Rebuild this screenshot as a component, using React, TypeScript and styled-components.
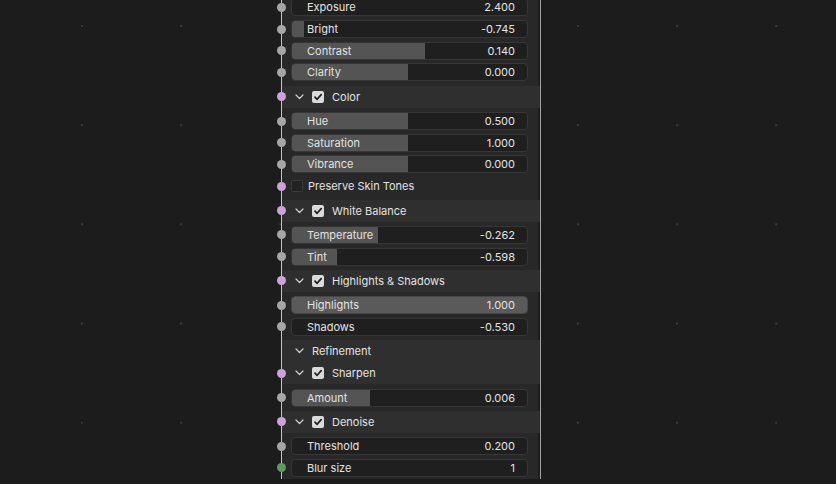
import React from 'react'
import styled, { createGlobalStyle } from 'styled-components'

const GlobalStyle = createGlobalStyle`
  html, body {
    margin: 0;
    height: 100%;
    overflow: hidden;
    background: #1c1c1c;
  }
  #root {
    height: 100%;
  }
`

const Canvas = styled.div`
  box-sizing: border-box;
  width: 100vw;
  height: 100vh;
  display: flex;
  align-items: flex-start;
  padding-left: 281px;
  overflow: hidden;
  background-color: #1c1c1c;
  background-image: radial-gradient(circle, #3a3a3a 0 1.1px, transparent 1.4px);
  background-size: 99.2px 99.2px;
  background-position: 32.4px -23.6px;
  font-family: Inter, 'Noto Sans', sans-serif;
  font-size: 11px;
  color: #e2e2e2;
`

const Node = styled.div`
  box-sizing: border-box;
  width: 260px;
  margin-top: -3.5px;
  display: flex;
  flex-direction: column;
  background: #282828;
  border-left: 1px solid #c4c4c4;
  border-right: 1px solid #a2a2a2;
  box-shadow: inset -2px 0 0 #1d1d1d;
`

const Row = styled.div`
  position: relative;
  height: 21.7px;
  display: flex;
  align-items: center;
  padding: 0 12px 0 9px;
`

// headers keep a small gap above and below, except where two headers touch
const Header = styled.div<{ $join?: 'below' | 'above' }>`
  position: relative;
  height: 22px;
  margin: ${({ $join }) =>
    $join === 'below' ? '2.5px 0 0' : $join === 'above' ? '0 0 2.5px' : '2.5px 0'};
  display: flex;
  align-items: center;
  gap: 8px;
  padding-left: 13px;
  background: #2f2f2f;
`

const Socket = styled.span<{ $color: string }>`
  position: absolute;
  left: -5px;
  top: 50%;
  width: 9px;
  height: 9px;
  margin-top: -4.5px;
  border-radius: 50%;
  background: ${({ $color }) => $color};
`

const Field = styled.div<{ $lit?: boolean }>`
  position: relative;
  flex: 1;
  height: 18px;
  box-sizing: border-box;
  border-radius: 4px;
  border: 1px solid ${({ $lit }) => ($lit ? '#474747' : '#363636')};
  background: #1f1f1f;
  overflow: hidden;
  display: flex;
  align-items: center;
  justify-content: space-between;
  padding: 0 12px 0 15px;
`

const Fill = styled.div<{ $lit?: boolean }>`
  position: absolute;
  left: 0;
  top: 0;
  bottom: 0;
  background: ${({ $lit }) => ($lit ? '#5a5a5a' : '#545454')};
`

const Text = styled.span`
  position: relative;
  white-space: nowrap;
`

const Chevron = styled.svg`
  width: 9px;
  height: 6px;
  flex: none;
`

const Check = styled.span<{ $on?: boolean }>`
  box-sizing: border-box;
  width: 12px;
  height: 12px;
  flex: none;
  border-radius: 2px;
  display: flex;
  align-items: center;
  justify-content: center;
  background: ${({ $on }) => ($on ? '#dadada' : '#222222')};
  border: ${({ $on }) => ($on ? 'none' : '1px solid #3a3a3a')};
`

const ToggleRow = styled(Row)`
  gap: 5px;
  padding-left: 9px;
`

const GREY = '#a6a6a6'
const PINK = '#cba3d8'
const GREEN = '#619a61'

type SliderProps = { label: string; value: string; pct?: number; socket?: string; lit?: boolean }

const Slider = ({ label, value, pct, socket = GREY, lit }: SliderProps) => (
  <Row>
    <Socket $color={socket} />
    <Field $lit={lit}>
      {pct !== undefined && <Fill $lit={lit} style={{ width: `${pct}%` }} />}
      <Text>{label}</Text>
      <Text>{value}</Text>
    </Field>
  </Row>
)

const ChevronIcon = () => (
  <Chevron viewBox="0 0 9 6">
    <path d="M1 1 L4.5 4.5 L8 1" fill="none" stroke="#cfcfcf" strokeWidth="1.2" strokeLinecap="round" strokeLinejoin="round" />
  </Chevron>
)

const CheckMark = () => (
  <svg width="10" height="10" viewBox="0 0 10 10">
    <path d="M2 5.2 L4.1 7.3 L8.2 2.6" fill="none" stroke="#1e1e1e" strokeWidth="1.7" strokeLinecap="round" strokeLinejoin="round" />
  </svg>
)

type PanelProps = { label: string; toggle?: boolean; join?: 'below' | 'above' }

const PanelHeader = ({ label, toggle = true, join }: PanelProps) => (
  <Header $join={join}>
    {toggle && <Socket $color={PINK} />}
    <ChevronIcon />
    {toggle && (
      <Check $on>
        <CheckMark />
      </Check>
    )}
    <Text>{label}</Text>
  </Header>
)

export default function App() {
  return (
    <Canvas>
      <GlobalStyle />
      <Node>
        <Slider label="Exposure" value="2.400" />
        <Slider label="Bright" value="-0.745" pct={5} />
        <Slider label="Contrast" value="0.140" pct={56.5} />
        <Slider label="Clarity" value="0.000" pct={49.5} />

        <PanelHeader label="Color" />
        <Slider label="Hue" value="0.500" pct={49.5} />
        <Slider label="Saturation" value="1.000" pct={49.5} />
        <Slider label="Vibrance" value="0.000" pct={49.5} />
        <ToggleRow>
          <Socket $color={PINK} />
          <Check />
          <Text>Preserve Skin Tones</Text>
        </ToggleRow>

        <PanelHeader label="White Balance" />
        <Slider label="Temperature" value="-0.262" pct={36.5} />
        <Slider label="Tint" value="-0.598" pct={19} />

        <PanelHeader label="Highlights &amp; Shadows" />
        <Slider label="Highlights" value="1.000" pct={100} lit />
        <Slider label="Shadows" value="-0.530" />

        <PanelHeader label="Refinement" toggle={false} join="below" />
        <PanelHeader label="Sharpen" join="above" />
        <Slider label="Amount" value="0.006" pct={33} />

        <PanelHeader label="Denoise" />
        <Slider label="Threshold" value="0.200" />
        <Slider label="Blur size" value="1" socket={GREEN} />
      </Node>
    </Canvas>
  )
}
